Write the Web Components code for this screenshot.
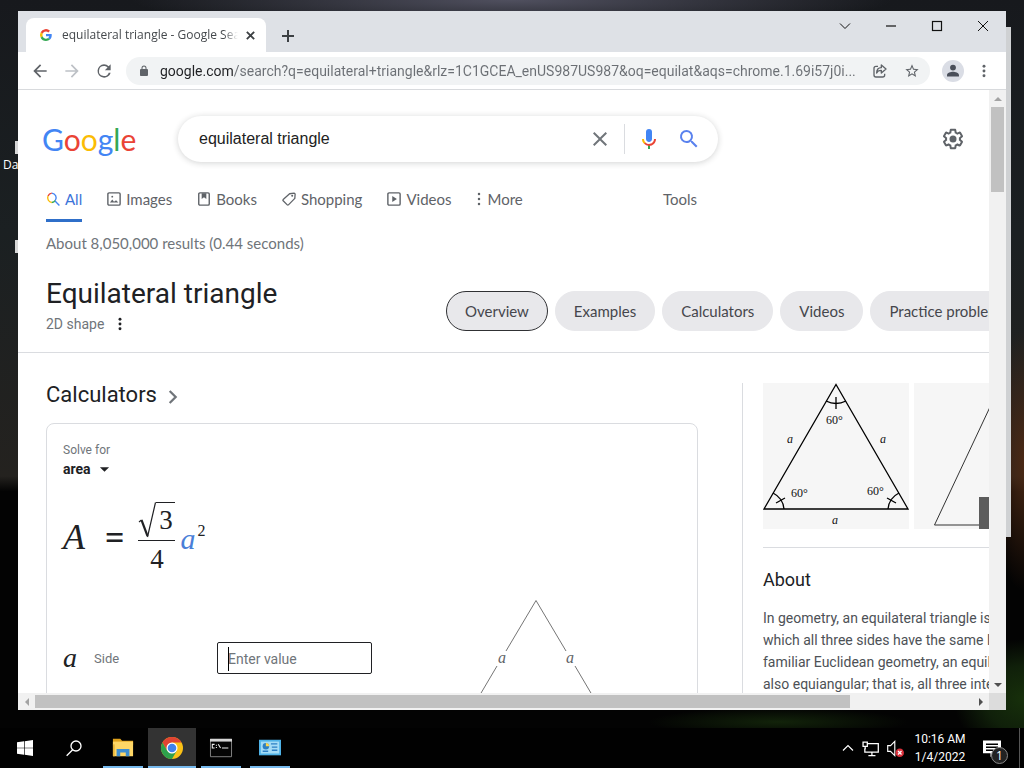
<!DOCTYPE html>
<html lang="en">
<head>
<meta charset="utf-8">
<title>Desktop</title>
<style>
  body {
    margin: 0;
    font-family: Roboto, "Liberation Sans", sans-serif;
    --google: Lato, Roboto, sans-serif;
    --segoe: "Open Sans", "Noto Sans", sans-serif;
    --times: "Liberation Serif", "DejaVu Serif", serif;
    --grey: #5f6368;
    --ink: #202124;
    --line: #dadce0;
  }
</style>
</head>
<body>
<desktop-shell>
  <browser-window>
    <browser-tab slot="tab">equilateral triangle - Google Search</browser-tab>
    <address-bar slot="toolbar"></address-bar>
    <results-page></results-page>
  </browser-window>
  <task-bar slot="taskbar"></task-bar>
</desktop-shell>

<script>
//helper: register an element that clones its template into a shadow root
function define(name, html, setup) {
  const template = document.createElement("template");
  template.innerHTML = html;

  class Element extends HTMLElement {
    constructor() {
      super();
      this.attachShadow({ mode: "open" });
      this.shadowRoot.appendChild(template.content.cloneNode(true));
    }
    connectedCallback() {
      if (setup) setup(this, this.shadowRoot);
    }
  }
  window.customElements.define(name, Element);
}

//icons, all on a 24 grid
const icons = {
  back: `<path fill="currentColor" d="M20 11H7.83l5.59-5.59L12 4l-8 8 8 8 1.41-1.41L7.83 13H20z"/>`,
  forward: `<path fill="currentColor" d="M4 11h12.17l-5.59-5.59L12 4l8 8-8 8-1.41-1.41L16.17 13H4z"/>`,
  reload: `<path fill="currentColor" d="M17.65 6.35A7.96 7.96 0 0012 4a8 8 0 108 10h-2.35A6 6 0 1112 6c1.66 0 3.14.69 4.22 1.78L13 11h7V4z"/>`,
  lock: `<path fill="currentColor" d="M18 8h-1V6A5 5 0 007 6v2H6a2 2 0 00-2 2v10c0 1.1.9 2 2 2h12a2 2 0 002-2V10a2 2 0 00-2-2zM9 6a3 3 0 016 0v2H9z"/>`,
  share: `<path fill="none" stroke="currentColor" stroke-width="2" stroke-linejoin="round" d="M9 5H6a3 3 0 00-3 3v10a3 3 0 003 3h10a3 3 0 003-3v-2M14 3l7 6-7 6v-4c-4 0-6 1-7 4 0-5 2-8 7-8z"/>`,
  star: `<path fill="currentColor" d="M22 9.24l-7.19-.62L12 2 9.19 8.63 2 9.24l5.46 4.73L5.82 21 12 17.27 18.18 21l-1.63-7.03zM12 15.4l-3.76 2.27 1-4.28-3.32-2.88 4.38-.38L12 6.1l1.71 4.04 4.38.38-3.32 2.88 1 4.28z"/>`,
  person: `<circle cx="12" cy="12" r="12" fill="#dadde5"/><path fill="#4a4f5a" d="M12 11.5a3.2 3.2 0 100-6.4 3.2 3.2 0 000 6.4zm0 1.2c-2.3 0-6.5 1.1-6.5 3.7V18h13v-1.6c0-2.6-4.2-3.7-6.5-3.7z"/>`,
  dots: `<g fill="currentColor"><circle cx="12" cy="5" r="2.2"/><circle cx="12" cy="12" r="2.2"/><circle cx="12" cy="19" r="2.2"/></g>`,
  more: `<g fill="currentColor"><circle cx="12" cy="-8" r="5"/><circle cx="12" cy="12" r="5"/><circle cx="12" cy="32" r="5"/></g>`,
  close: `<path fill="currentColor" d="M19 6.41L17.59 5 12 10.59 6.41 5 5 6.41 10.59 12 5 17.59 6.41 19 12 13.41 17.59 19 19 17.59 13.41 12z"/>`,
  tabclose: `<path fill="none" stroke="currentColor" stroke-width="4" d="M4 4l16 16M20 4L4 20"/>`,
  plus: `<path fill="currentColor" d="M10.5 3h3v7.5H21v3h-7.5V21h-3v-7.5H3v-3h7.5z"/>`,
  search: `<path fill="currentColor" d="M15.5 14h-.79l-.28-.27A6.5 6.5 0 109.5 16c1.61 0 3.09-.59 4.23-1.57l.27.28v.79l5 4.99L20.49 19zm-6 0a4.5 4.5 0 110-9 4.5 4.5 0 010 9z"/>`,
  mic: `<path fill="#4285f4" d="M12 15c1.66 0 3-1.31 3-2.97V5.01a3 3 0 00-6 0v7.02C9 13.69 10.34 15 12 15z"/><path fill="#34a853" d="M11 18.08h2V22h-2z"/><path fill="#fbbc05" d="M7.05 16.87C5.78 15.54 5 14.04 5 12h2c0 1.45.56 2.42 1.47 3.38v.32l-1.15 1.18z"/><path fill="#ea4335" d="M12 16.93a5 5.2 0 01-3.54-1.55l-1.41 1.49A6.8 6.8 0 0012 19c3.87 0 6.99-2.92 6.99-7H17c0 2.92-2.24 4.93-5 4.93z"/>`,
  gear: `<path fill="currentColor" d="M13.85 22.25h-3.7c-.74 0-1.36-.54-1.45-1.27l-.27-1.89c-.27-.14-.53-.29-.79-.46l-1.8.72c-.7.26-1.47-.03-1.81-.65L2.2 15.53c-.35-.66-.2-1.44.36-1.88l1.53-1.19c-.01-.15-.02-.3-.02-.46 0-.15.01-.31.02-.46l-1.52-1.19c-.59-.45-.74-1.26-.37-1.88l1.85-3.19c.34-.62 1.11-.9 1.79-.63l1.81.73c.26-.17.52-.32.78-.46l.27-1.91c.09-.7.71-1.25 1.44-1.25h3.7c.74 0 1.36.54 1.45 1.27l.27 1.89c.27.14.53.29.79.46l1.8-.72c.71-.26 1.48.03 1.82.65l1.84 3.18c.36.66.2 1.44-.36 1.88l-1.52 1.19c.01.15.02.3.02.46s-.01.31-.02.46l1.52 1.19c.56.45.72 1.23.37 1.86l-1.86 3.22c-.34.62-1.11.9-1.8.63l-1.8-.72c-.26.17-.52.32-.78.46l-.27 1.91c-.1.68-.72 1.22-1.46 1.22zm-3.23-2h2.76l.37-2.55.53-.22c.44-.18.88-.44 1.34-.78l.45-.34 2.38.96 1.38-2.4-2.03-1.58.07-.56c.03-.26.06-.51.06-.78s-.03-.53-.06-.78l-.07-.56 2.03-1.58-1.39-2.4-2.39.96-.45-.35c-.42-.32-.87-.58-1.33-.77l-.52-.22-.37-2.55h-2.76l-.37 2.55-.53.21c-.44.19-.88.44-1.34.79l-.45.33-2.38-.95-1.39 2.39 2.03 1.58-.07.56a7 7 0 00-.06.79c0 .26.02.53.06.78l.07.56-2.03 1.58 1.38 2.4 2.39-.96.45.35c.43.33.86.58 1.33.77l.53.22z"/><circle cx="12" cy="12" r="3.5" fill="currentColor"/>`,
  all: `<g fill="none" stroke-width="2.4"><path stroke="#ea4335" d="M3.5 7A8 8 0 0110 2"/><path stroke="#fbbc05" d="M10 18A8 8 0 013.5 7"/><path stroke="#34a853" d="M16 14.5A8 8 0 0110 18"/><path stroke="#4285f4" d="M10 2a8 8 0 016 12.5M15.5 15.5L23 23"/></g>`,
  image: `<rect x="1.5" y="1.5" width="21" height="21" rx="2" fill="none" stroke="currentColor" stroke-width="2.4"/><path fill="currentColor" d="M5 18l4-5 3 3.5 3.5-2.5 4 4z"/><circle cx="9" cy="8" r="1.6" fill="currentColor"/>`,
  book: `<rect x="3" y="1.5" width="18" height="21" rx="2" fill="none" stroke="currentColor" stroke-width="2.4"/><path fill="currentColor" d="M8 2h8v10l-4-3-4 3z"/>`,
  tag: `<path fill="none" stroke="currentColor" stroke-width="2.2" stroke-linejoin="round" d="M13 3l8-1 1.5 1.5L22 11 11 22q-1 1-2 0l-7-7q-1-1 0-2z"/><circle cx="17.5" cy="6.5" r="1.7" fill="currentColor"/>`,
  video: `<rect x="1.5" y="1.5" width="21" height="21" rx="2" fill="none" stroke="currentColor" stroke-width="2.4"/><path fill="currentColor" d="M9 7l8 5-8 5z"/>`,
  chevron: `<path fill="none" stroke="currentColor" stroke-width="3.4" d="M7 3l9 9-9 9"/>`,
  down: `<path fill="none" stroke="currentColor" stroke-width="2" d="M2 7l10 10L22 7"/>`,
  up: `<path fill="none" stroke="currentColor" stroke-width="2.4" d="M2 17L12 7l10 10"/>`,
  minimize: `<path stroke="currentColor" stroke-width="2.4" d="M2 12h20"/>`,
  maximize: `<rect x="3" y="3" width="18" height="18" fill="none" stroke="currentColor" stroke-width="2.4"/>`,
  winclose: `<path stroke="currentColor" stroke-width="2" d="M2 2l20 20M22 2L2 22"/>`,
  google: `<path fill="#ea4335" d="M12 5c1.8 0 3.3.6 4.6 1.8L20 3.4A12 12 0 001.3 6.6l4 3.1A7 7 0 0112 5z"/><path fill="#4285f4" d="M23.5 12.3c0-.8-.1-1.5-.2-2.3H12v4.6h6.5a5.5 5.5 0 01-2.4 3.6l3.9 3c2.3-2.1 3.5-5.2 3.5-8.9z"/><path fill="#fbbc05" d="M5.3 14.3a7 7 0 010-4.6l-4-3.1a12 12 0 000 10.8z"/><path fill="#34a853" d="M12 24c3.2 0 6-1.1 8-2.9l-3.9-3A7.2 7.2 0 015.3 14.3l-4 3.1A12 12 0 0012 24z"/>`,
  windows: `<path fill="#fff" d="M0 3.4L10.5 2v9.5H0zM11.5 1.8L24 0v11.5H11.5zM0 12.5h10.5V22L0 20.6zM11.5 12.5H24V24l-12.5-1.8z"/>`,
  magnify: `<g fill="none" stroke="#fff" stroke-width="2"><circle cx="15" cy="9" r="7.5"/><path d="M10 14.5L1 23.5"/></g>`,
  folder: `<path fill="#e0a21c" d="M1 2h8l2 2h12v5H1z"/><path fill="#ffd766" d="M1 5h22v16H1z"/><path fill="#3e8ed0" d="M5 21v-8h14v8h-4v-4H9v4z"/><path fill="#e9b63a" d="M1 8h2v13H1z"/>`,
  chrome: `<circle cx="12" cy="12" r="12" fill="#fbc116"/><path fill="#e04433" d="M12 6h10.4a12 12 0 00-20.8 0L6.8 15z"/><path fill="#2da14c" d="M1.6 6a12 12 0 0010.4 18l5.2-9-5.2 3-5.2-3z"/><circle cx="12" cy="12" r="6" fill="#fff"/><circle cx="12" cy="12" r="4.7" fill="#4182ec"/>`,
  cmd: `<path fill="#050505" stroke="#8b8b8b" d="M.5 2.5h23v19H.5z"/><path fill="#d6d6d6" d="M0 2h24v3H0z"/><path fill="none" stroke="#eee" stroke-width="1.2" d="M5 8H2.5v4H5M7 8.5v1M7 11v1M9 8l2.5 4M13 12h7"/>`,
  server: `<path fill="#4fb3e8" d="M0 3h24v17H0z"/><path fill="#a5dcf6" d="M2 5h20v13H2z"/><circle cx="7.5" cy="10" r="3.5" fill="#2d7fc4"/><path fill="#ffd54a" d="M7.5 10V6.5A3.5 3.5 0 0111 10z"/><path stroke="#2d7fc4" stroke-width="1.5" d="M13 7.5h7M14 11h6M14 14.5h6M4 15.5h6"/>`,
  network: `<g fill="none" stroke="#fff" stroke-width="1.8"><path d="M7 5h16v12H4v-5M14 17v4M9 22h10"/><path d="M1.5 3h6v6h-6zM4.5 9v4"/></g>`,
  volume: `<path fill="none" stroke="#fff" stroke-width="1.6" d="M1 8h4l6-6v20l-6-6H1z"/><circle cx="18" cy="18" r="6" fill="#d9303b"/><path stroke="#fff" stroke-width="1.8" d="M15.5 15.5l5 5M20.5 15.5l-5 5"/>`,
  notes: `<path fill="#fff" d="M0 2h24v17h-9l-5 5v-5H0z"/><path stroke="#000" stroke-width="2" d="M4 7h16M4 11h16M4 15h10"/>`,
  caret: `<path fill="currentColor" d="M2 7h20L12 17z"/>`
};

//ui-icon: name, size
define("ui-icon", `<style>
  :host { display: block; flex: none; }
  svg { display: block; width: 100%; height: 100%; overflow: visible; }
</style><svg viewBox="0 0 24 24" aria-hidden="true"></svg>`, (el, root) => {
  root.querySelector("svg").innerHTML = icons[el.getAttribute("name")];
  el.style.width = el.style.height = el.getAttribute("size") + "px";
});

//desktop
define("desktop-shell", `<style>
  :host {
    display: flex;
    flex-direction: column;
    height: 100vh;
    overflow: hidden;
    position: relative;
    background:
      radial-gradient(ellipse 70px 60px at 100% 91%, #17300b 0%, #10200a 55%, transparent 100%),
      radial-gradient(ellipse 130px 14px at 76% 94%, #12230a 0%, transparent 100%),
      radial-gradient(ellipse 36px 130px at 100% 60%, #4a2814 0%, transparent 100%),
      radial-gradient(ellipse 380px 30px at 50% 0%, #50505f 0%, transparent 100%),
      linear-gradient(#17191d 0, #1b2022 30%, #24221f 62%, #030303 64%, #030303 100%);
  }
  .stage { flex: 1; min-height: 0; display: flex; padding: 11px 18px 18px; }
  ::slotted(browser-window) { flex: 1; min-width: 0; position: relative; }
  .behind {
    position: absolute; top: 27px; right: 13px; width: 24px; height: 510px;
    background: #cfd1d3;
  }
  .shortcut { position: absolute; left: 3px; top: 157px; font: 12px/16px var(--segoe); color: #fff; }
  .glyph { position: absolute; left: 15px; width: 8px; height: 13px; background: #d8d8d8; }
  .one { top: 141px; }
  .two { top: 240px; }
</style>
<div class="behind"></div>
<div class="glyph one"></div><div class="shortcut">Da</div><div class="glyph two"></div>
<div class="stage"><slot></slot></div>
<slot name="taskbar"></slot>`);

//scroll bar, horizontal or vertical
define("scroll-bar", `<style>
  :host { display: flex; background: #f1f1f1; --size: 17px; }
  :host([vertical]) { flex-direction: column; width: var(--size); flex: none; }
  :host(:not([vertical])) { height: var(--size); flex: 1; }
  .end { width: 17px; height: 17px; display: grid; place-items: center; flex: none; color: #505050; }
  .start { color: #a3a3a3; }
  .track { flex: 1; display: flex; flex-direction: inherit; min-height: 0; }
  .thumb { background: #c1c1c1; margin: 2px 0; }
  :host([vertical]) .thumb { margin: 0 2px; }
  svg { display: block; width: 8px; height: 8px; }
  :host([vertical]) svg { transform: rotate(90deg); }
</style>
<div class="end start"><svg viewBox="0 0 8 8"><path fill="currentColor" d="M6 0v8L2 4z"/></svg></div>
<div class="track"><div class="thumb"></div></div>
<div class="end"><svg viewBox="0 0 8 8"><path fill="currentColor" d="M2 0v8l4-4z"/></svg></div>`, (el, root) => {
  root.querySelector(".thumb").style.flex = "0 0 " + el.getAttribute("thumb");
});

//browser window
define("browser-window", `<style>
  :host { display: flex; flex-direction: column; background: #fff; overflow: hidden; }
  .strip { display: flex; height: 41px; background: #dee1e6; padding-left: 8px; }
  .strip slot { display: flex; align-items: flex-end; }
  button { border: 0; background: none; padding: 0; display: grid; place-items: center; color: #111; }
  .new { width: 28px; height: 28px; margin: 11px 0 0 8px; color: #3c4043; }
  .controls { margin-left: auto; display: flex; }
  .controls button { width: 46px; height: 29px; }
  .view { flex: 1; display: flex; min-height: 0; border-top: 1px solid #d8dadd; }
  .page { flex: 1; min-width: 0; overflow: hidden; }
  .bottom { display: flex; flex: none; }
  .corner { width: 17px; background: #dcdcdc; }
</style>
<div class="strip">
  <slot name="tab"></slot>
  <button class="new" aria-label="New tab"><ui-icon name="plus" size="16"></ui-icon></button>
  <div class="controls">
    <button aria-label="Search tabs"><ui-icon name="down" size="12"></ui-icon></button>
    <button aria-label="Minimize"><ui-icon name="minimize" size="12"></ui-icon></button>
    <button aria-label="Maximize"><ui-icon name="maximize" size="12"></ui-icon></button>
    <button aria-label="Close"><ui-icon name="winclose" size="12"></ui-icon></button>
  </div>
</div>
<slot name="toolbar"></slot>
<div class="view">
  <div class="page"><slot></slot></div>
  <scroll-bar vertical thumb="15%"></scroll-bar>
</div>
<div class="bottom"><scroll-bar thumb="87%"></scroll-bar><div class="corner"></div></div>`);

//tab
define("browser-tab", `<style>
  :host {
    display: flex; align-items: center; box-sizing: border-box;
    width: 240px; height: 34px; padding: 0 10px 0 14px;
    background: #fff; border-radius: 8px 8px 0 0;
    font: 12px/16px var(--segoe); color: #45494d;
  }
  .title {
    flex: 1; min-width: 0; margin: 0 6px 0 10px; overflow: hidden; white-space: nowrap;
    -webkit-mask-image: linear-gradient(90deg, #000 92%, transparent 100%);
  }
  button { border: 0; background: none; padding: 0; width: 12px; display: grid; place-items: center; color: #3c4043; }
</style>
<ui-icon name="google" size="12"></ui-icon>
<span class="title"><slot></slot></span>
<button aria-label="Close tab"><ui-icon name="tabclose" size="11"></ui-icon></button>`);

//toolbar
define("address-bar", `<style>
  :host { display: flex; align-items: center; height: 37px; padding: 0 14px 0 12px; background: #fff; flex: none; color: var(--grey); }
  button { border: 0; background: none; padding: 0; display: grid; place-items: center; color: inherit; }
  .nav { width: 20px; margin-right: 12px; }
  .off { color: #bdc1c6; }
  .box { flex: 1; min-width: 0; display: flex; align-items: center; height: 28px; padding: 0 10px 0 12px; gap: 10px; border-radius: 14px; background: #f1f3f4; }
  /* the host name is darker than the rest of the address */
  input {
    flex: 1; min-width: 0; height: 24px; border: 0; padding: 0; outline: 0;
    font: 14px/20px Roboto, sans-serif; color: var(--grey);
    background: linear-gradient(90deg, #202124 73px, #6b6f74 73px);
    -webkit-background-clip: text; -webkit-text-fill-color: transparent;
  }
  .star { margin-left: 6px; }
  .me { margin: 0 12px; }
</style>
<button class="nav" aria-label="Back"><ui-icon name="back" size="20"></ui-icon></button>
<button class="nav off" aria-label="Forward"><ui-icon name="forward" size="20"></ui-icon></button>
<button class="nav" aria-label="Reload"><ui-icon name="reload" size="20"></ui-icon></button>
<div class="box">
  <ui-icon name="lock" size="12"></ui-icon>
  <input aria-label="Address" value="google.com/search?q=equilateral+triangle&amp;rlz=1C1GCEA_enUS987US987&amp;oq=equilat&amp;aqs=chrome.1.69i57j0i...">
  <button aria-label="Share"><ui-icon name="share" size="16"></ui-icon></button>
  <button class="star" aria-label="Bookmark"><ui-icon name="star" size="16"></ui-icon></button>
</div>
<button class="me" aria-label="Profile"><ui-icon name="person" size="22"></ui-icon></button>
<button aria-label="Menu"><ui-icon name="dots" size="16"></ui-icon></button>`);

//google search box
define("search-box", `<style>
  :host {
    display: flex; align-items: center; box-sizing: border-box;
    width: 540px; height: 46px; padding: 0 17px 0 21px; border-radius: 23px;
    background: #fff; box-shadow: 0 1px 6px rgba(32,33,36,.2);
  }
  input { flex: 1; min-width: 0; border: 0; outline: 0; padding: 0; background: none; font: 16px/24px "Liberation Sans", sans-serif; color: #222; }
  button { border: 0; background: none; padding: 0; display: grid; place-items: center; color: #70757a; }
  .clear { padding-right: 12px; }
  .voice { padding: 3px 16px 3px 12px; border-left: 1px solid var(--line); }
  .go { color: #5a82ee; }
</style>
<input aria-label="Search" value="equilateral triangle">
<button class="clear" aria-label="Clear"><ui-icon name="close" size="24"></ui-icon></button>
<button class="voice" aria-label="Search by voice"><ui-icon name="mic" size="24"></ui-icon></button>
<button class="go" aria-label="Google Search"><ui-icon name="search" size="24"></ui-icon></button>`);

//one entry of the row under the search box
define("nav-tab", `<style>
  :host { display: block; }
  a {
    display: flex; align-items: center; gap: 5px; height: 42px; padding-bottom: 2px; box-sizing: border-box;
    font: 15px/20px var(--google); color: var(--grey); text-decoration: none; border-bottom: 3px solid transparent;
  }
  :host([active]) a { color: #3b73d9; border-color: #2f6fc9; }
</style><a href="#"><slot name="icon"></slot><span><slot></slot></span></a>`);

//chip
define("page-chip", `<style>
  :host { display: block; flex: none; }
  button {
    height: 40px; padding: 0 18px; border: 1px solid #e8e8eb; border-radius: 20px;
    background: #e8e8eb; color: #45464c; font: 15px/20px var(--google);
  }
  :host([active]) button { border-color: #303134; }
</style><button><slot></slot></button>`);

//formula: A = sqrt(3)/4 a^2
define("area-formula", `<style>
  :host { display: flex; align-items: center; font-family: var(--times); color: var(--ink); }
  .big { font-size: 36px; line-height: 40px; font-style: italic; }
  .equals { font-size: 34px; line-height: 40px; font-weight: bold; margin: 0 14px 0 20px; padding-top: 2px; }
  .fraction { display: flex; flex-direction: column; align-items: center; width: 37px; font-size: 27px; line-height: 30px; padding-top: 4px; }
  .top { display: flex; justify-content: flex-end; width: 100%; padding: 2px 0 2px; border-bottom: 1px solid currentColor; }
  .top svg { width: 18px; height: 36px; flex: none; }
  .radicand { border-top: 1px solid currentColor; width: 20px; text-align: center; line-height: 35px; }
  .bottom { line-height: 36px; }
  .side { font-size: 30px; line-height: 34px; font-style: italic; color: #4a7fd8; margin-left: 5px; padding-top: 4px; }
  sup { font-size: 16px; line-height: 16px; align-self: center; margin: 0 0 12px 2px; }
</style>
<span class="big">A</span><span class="equals">=</span>
<span class="fraction">
  <span class="top"><svg viewBox="0 0 18 36" fill="none" stroke="currentColor"><path stroke-width="1.2" d="M1 20l2.5-2M9.5 35L17.5 .5"/><path stroke-width="2.2" d="M3.5 18l6 16"/></svg><span class="radicand">3</span></span>
  <span class="bottom">4</span>
</span>
<span class="side">a</span><sup>2</sup>`);

//calculator
define("calculator-card", `<style>
  :host { display: block; border: 1px solid var(--line); border-radius: 8px; padding: 17px 16px; height: 420px; }
  .solve { display: flex; flex-direction: column; align-items: flex-start; font-size: 12px; line-height: 19px; color: #70757a; }
  .pick { display: flex; align-items: center; color: var(--ink); }
  select { appearance: none; border: 0; background: none; padding: 0; margin: 0; width: 36px; font: bold 14px/18px Roboto, sans-serif; color: inherit; }
  area-formula { margin-top: 18px; }
  .row { display: flex; justify-content: space-between; margin-top: 23px; }
  .entry { display: flex; align-items: center; height: 32px; margin-top: 42px; }
  .symbol { font: italic 28px/32px var(--times); color: var(--ink); width: 31px; }
  .name { font-size: 13px; color: #70757a; width: 123px; }
  .field { position: relative; width: 155px; }
  input { box-sizing: border-box; width: 100%; height: 32px; border: 1px solid #202124; border-radius: 2px; padding: 2px 10px 0; font: 14px/20px Roboto, sans-serif; outline: 0; background: #fff; }
  input::placeholder { color: #70757a; opacity: 1; }
  .caret { position: absolute; left: 11px; top: 5px; width: 1px; height: 24px; background: #000; }
  svg { width: 150px; height: 130px; margin-right: 70px; flex: none; font: italic 16px var(--times); }
</style>
<div class="solve">
  <label for="solve">Solve for</label>
  <div class="pick"><select id="solve"><option>area</option></select><ui-icon name="caret" size="11"></ui-icon></div>
</div>
<area-formula></area-formula>
<div class="row">
  <div class="entry">
    <span class="symbol">a</span><label class="name" for="side">Side</label>
    <div class="field"><input id="side" placeholder="Enter value"><span class="caret"></span></div>
  </div>
  <svg viewBox="0 0 150 130">
    <path fill="none" stroke="#757575" d="M45 51L75 .5 105 51M36 66L0 127M114 66L150 127"/>
    <text x="37" y="63" fill="#5f6368">a</text><text x="105" y="63" fill="#5f6368">a</text>
  </svg>
</div>`);

//knowledge panel
define("knowledge-panel", `<style>
  :host { display: block; width: 332px; border-left: 1px solid var(--line); padding-left: 20px; }
  .pictures { display: flex; gap: 5px; padding-bottom: 18px; border-bottom: 1px solid var(--line); }
  .picture { position: relative; width: 146px; height: 146px; background: #f6f6f6; flex: none; }
  svg { display: block; width: 146px; height: 146px; font: 12px var(--times); }
  .more { position: absolute; left: 65px; bottom: 0; width: 81px; height: 32px; background: #5c5c5c; }
  h2 { margin: 20px 0 15px; font-size: 18px; line-height: 24px; font-weight: 400; color: var(--ink); }
  p { margin: 0; font-size: 14px; line-height: 22px; color: #4d5156; }
</style>
<div class="pictures">
  <div class="picture"><svg viewBox="0 0 146 146">
    <g fill="none" stroke="#000" stroke-width="1.3">
      <path d="M1 126L73 1.5 145 126z"/>
      <path d="M63 18q10 5 20 0M73 14v12M10 110q10 5 11 16M13 120l9-5M136 110q-10 5-11 16M133 120l-9-5"/>
    </g>
    <g fill="#111"><text x="63" y="41">60°</text><text x="28" y="114">60°</text><text x="104" y="112">60°</text></g>
    <g fill="#111" font-style="italic"><text x="24" y="60">a</text><text x="117" y="60">a</text><text x="69" y="141">a</text></g>
  </svg></div>
  <div class="picture"><svg viewBox="0 0 146 146"><path fill="none" stroke="#333" d="M20.5 142L84 7l62 135z"/></svg><span class="more"></span></div>
</div>
<h2>About</h2>
<p>In geometry, an equilateral triangle is a triangle in which all three sides have the same length. In the familiar Euclidean geometry, an equilateral triangle is also equiangular; that is, all three internal angles are also congruent to each other.</p>`);

//results page
define("results-page", `<style>
  :host { display: block; color: var(--ink); }
  .search { display: flex; align-items: center; padding: 26px 24px 0; }
  .logo { display: block; width: 136px; font: 30px/44px Lato, sans-serif; text-decoration: none; color: #4285f4; }
  .r { color: #ea4335; } .y { color: #fbbc05; } .b { color: #4285f4; } .g { color: #34a853; }
  .settings { margin: 0 0 0 auto; border: 0; background: none; padding: 0; color: var(--grey); }
  nav { display: flex; gap: 25px; width: 651px; padding: 18px 28px 0; }
  .tools { margin-left: auto; }
  .stats { padding: 10px 28px 0; font: 15px/22px var(--google); color: #70757a; }
  .entity { display: flex; justify-content: space-between; padding: 24px 0 14px 28px; border-bottom: 1px solid var(--line); }
  .name { width: 400px; flex: none; }
  h1 { margin: 0; font: 28px/32px Roboto, sans-serif; }
  .kind { display: flex; align-items: center; gap: 8px; font-size: 14px; line-height: 28px; color: #70757a; }
  .kind button { border: 0; background: none; padding: 0; color: var(--ink); }
  .chips { flex: 1; min-width: 0; display: flex; gap: 7px; padding-top: 13px; }
  .columns { display: flex; padding: 30px 0 0 28px; }
  .left { width: 652px; margin-right: 44px; flex: none; }
  h2 { display: flex; align-items: center; gap: 8px; margin: 0 0 16px; font-size: 22px; line-height: 24px; font-weight: 400; }
  h2 ui-icon { color: #70757a; padding-top: 4px; }
  knowledge-panel { flex: none; }
</style>
<div class="search">
  <a class="logo" href="#" aria-label="Google">G<span class="r">o</span><span class="y">o</span><span class="b">g</span><span class="g">l</span><span class="r">e</span></a>
  <search-box></search-box>
  <button class="settings" aria-label="Settings"><ui-icon name="gear" size="24"></ui-icon></button>
</div>
<nav>
  <nav-tab active><ui-icon slot="icon" name="all" size="14"></ui-icon>All</nav-tab>
  <nav-tab><ui-icon slot="icon" name="image" size="14"></ui-icon>Images</nav-tab>
  <nav-tab><ui-icon slot="icon" name="book" size="14"></ui-icon>Books</nav-tab>
  <nav-tab><ui-icon slot="icon" name="tag" size="14"></ui-icon>Shopping</nav-tab>
  <nav-tab><ui-icon slot="icon" name="video" size="14"></ui-icon>Videos</nav-tab>
  <nav-tab><ui-icon slot="icon" name="more" size="6"></ui-icon>More</nav-tab>
  <nav-tab class="tools">Tools</nav-tab>
</nav>
<div class="stats">About 8,050,000 results (0.44 seconds)</div>
<div class="entity">
  <div class="name">
    <h1>Equilateral triangle</h1>
    <div class="kind">2D shape <button aria-label="More options"><ui-icon name="dots" size="16"></ui-icon></button></div>
  </div>
  <div class="chips">
    <page-chip active>Overview</page-chip>
    <page-chip>Examples</page-chip>
    <page-chip>Calculators</page-chip>
    <page-chip>Videos</page-chip>
    <page-chip>Practice problems</page-chip>
  </div>
</div>
<div class="columns">
  <div class="left">
    <h2>Calculators <ui-icon name="chevron" size="16"></ui-icon></h2>
    <calculator-card></calculator-card>
  </div>
  <knowledge-panel></knowledge-panel>
</div>`);

//taskbar
define("task-button", `<style>
  :host { display: block; width: 48px; }
  button { width: 100%; height: 100%; border: 0; background: none; padding: 0; display: grid; place-items: center; }
  :host([open]) button { background: linear-gradient(#76b9ed, #76b9ed) 50% 100% / 40px 2px no-repeat; }
  :host([active]) button { background: linear-gradient(#76b9ed, #76b9ed) 0 100% / 100% 2px no-repeat #333; }
</style><button><slot></slot></button>`, (el, root) => {
  root.querySelector("button").setAttribute("aria-label", el.getAttribute("label"));
});

define("task-bar", `<style>
  :host { display: flex; height: 40px; flex: none; background: #010101; color: #fff; padding-left: 1px; gap: 1px; position: relative; }
  .tray { margin-left: auto; display: flex; align-items: center; gap: 8px; }
  time { font: 12px/18px Roboto, sans-serif; text-align: center; width: 52px; white-space: nowrap; margin-left: 2px; }
  .note { position: relative; margin: 0 18px 0 9px; }
  .badge {
    position: absolute; left: 8px; top: 8px; width: 15px; height: 15px; border: 1px solid #888; border-radius: 50%;
    background: #222; font: 12px/15px var(--segoe); text-align: center;
  }
  .peek { width: 4px; height: 40px; border-left: 1px solid #555; margin-left: -8px; }
</style>
<task-button label="Start"><ui-icon name="windows" size="16"></ui-icon></task-button>
<task-button label="Search"><ui-icon name="magnify" size="16"></ui-icon></task-button>
<task-button label="File Explorer" open><ui-icon name="folder" size="22"></ui-icon></task-button>
<task-button label="Google Chrome" active><ui-icon name="chrome" size="22"></ui-icon></task-button>
<task-button label="Command Prompt" open><ui-icon name="cmd" size="22"></ui-icon></task-button>
<task-button label="Server Manager" open><ui-icon name="server" size="22"></ui-icon></task-button>
<div class="tray">
  <ui-icon name="up" size="12"></ui-icon>
  <ui-icon name="network" size="17"></ui-icon>
  <ui-icon name="volume" size="17"></ui-icon>
  <time>10:16 AM<br>1/4/2022</time>
  <div class="note"><ui-icon name="notes" size="18"></ui-icon><span class="badge">1</span></div>
  <span class="peek"></span>
</div>`);
</script>
</body>
</html>
